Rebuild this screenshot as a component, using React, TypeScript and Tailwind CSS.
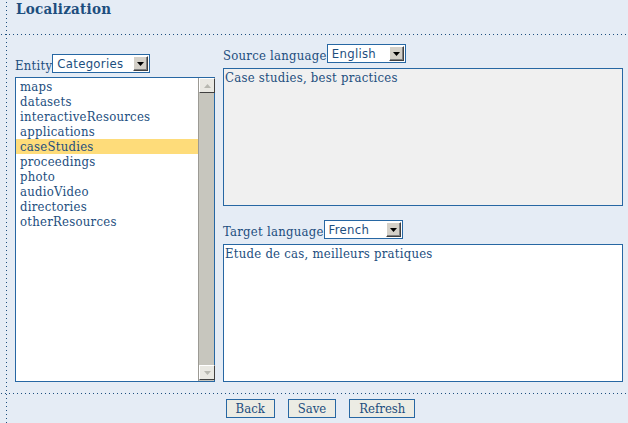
import React from "react";

const entities = [
  "maps",
  "datasets",
  "interactiveResources",
  "applications",
  "caseStudies",
  "proceedings",
  "photo",
  "audioVideo",
  "directories",
  "otherResources",
];

function DropArrow({ faded = false }: { faded?: boolean }) {
  return (
    <svg width="7" height="4" viewBox="0 0 7 4">
      <path d="M0 0h7L3.5 4z" fill={faded ? "#b8b8b0" : "#000"} />
    </svg>
  );
}

function Select({ value, width }: { value: string; width: string }) {
  return (
    <div
      className={`inline-flex items-center justify-between h-[19px] ${width} border border-[#2767a3] bg-white`}
    >
      <span className="pl-[4px] text-[13px] leading-none tracking-[0.3px] text-[#1d4e7e] font-['DejaVu_Sans',sans-serif] font-stretch-condensed">
        {value}
      </span>
      <span className="mr-[1px] flex items-center justify-center w-[15px] h-[15px] bg-[#d4d0c8] border-t border-l border-t-white border-l-white border-r border-b border-r-[#404040] border-b-[#404040] shadow-[inset_-1px_-1px_0_#808080]">
        <DropArrow />
      </span>
    </div>
  );
}

function Dots() {
  return (
    <div className="h-px w-full bg-[linear-gradient(to_right,transparent_1px,#1d4e7e_1px,#1d4e7e_2px,transparent_2px)] bg-[length:4px_1px] bg-repeat-x" />
  );
}

function ScrollBtn({ up }: { up?: boolean }) {
  return (
    <div className="flex items-center justify-center w-[16px] h-[15px] bg-[#e9e8e2] border-t border-l border-t-white border-l-white border-r border-b border-r-[#404040] border-b-[#404040]">
      <span className={up ? "rotate-180" : ""}>
        <DropArrow faded />
      </span>
    </div>
  );
}

export default function App() {
  return (
    <div className="font-['DejaVu_Serif',serif] font-stretch-condensed tracking-[0.25px] w-[628px] h-[423px] bg-[#e5ecf5] text-[#1d4e7e] bg-[linear-gradient(to_bottom,transparent_2px,#1d4e7e_2px,#1d4e7e_3px,transparent_3px)] bg-[length:1px_4px] bg-[position:6px_0] bg-repeat-y flex flex-col">
      <div className="h-[34px] pl-[16px] pt-[1px]">
        <h1 className="text-[15px] leading-[16px] font-bold">Localization</h1>
      </div>
      <Dots />

      <div className="flex h-[358px] pl-[15px]">
        {/* entity list */}
        <div className="w-[200px] flex flex-col">
          <div className="mt-[19px] flex items-end h-[19px] text-[13px]">
            <span className="leading-[15px]">Entity</span>
            <Select value="Categories" width="w-[98px]" />
          </div>
          <div className="mt-[4px] h-[305px] border border-[#2767a3] bg-white flex">
            <ul className="flex-1 pt-[1px] text-[13px] leading-[15px]">
              {entities.map((e) => (
                <li
                  key={e}
                  className={`pl-[4px] h-[15px] ${e === "caseStudies" ? "bg-[#fedc7a]" : ""}`}
                >
                  {e}
                </li>
              ))}
            </ul>
            <div className="w-[16px] flex flex-col justify-between bg-[#c7c6be] border-l border-l-[#9c9a94]">
              <ScrollBtn up />
              <div className="mb-[1px]">
                <ScrollBtn />
              </div>
            </div>
          </div>
        </div>

        {/* translation panes */}
        <div className="ml-[8px] w-[400px] flex flex-col text-[13px]">
          <div className="mt-[9px] flex items-end h-[19px]">
            <span className="leading-[15px]">Source language</span>
            <Select value="English" width="w-[79px]" />
          </div>
          <div className="mt-[5px] h-[138px] border border-[#2767a3] bg-[#f0f0f0] px-[1px] leading-[15px] pt-[1px]">
            Case studies, best practices
          </div>
          <div className="mt-[14px] flex items-end h-[19px]">
            <span className="leading-[15px]">Target language</span>
            <Select value="French" width="w-[79px]" />
          </div>
          <div className="mt-[5px] h-[138px] border border-[#2767a3] bg-white px-[1px] leading-[15px] pt-[1px]">
            Etude de cas, meilleurs pratiques
          </div>
        </div>
      </div>

      <Dots />
      <div className="mt-[5px] pl-[13px] flex justify-center gap-[13px] text-[13px]">
        {["Back", "Save", "Refresh"].map((b) => (
          <button
            key={b}
            className="h-[19px] px-[9px] border border-[#2767a3] bg-[#ecece4] leading-[15px] tracking-normal text-[#1d4e7e]"
          >
            {b}
          </button>
        ))}
      </div>
    </div>
  );
}
